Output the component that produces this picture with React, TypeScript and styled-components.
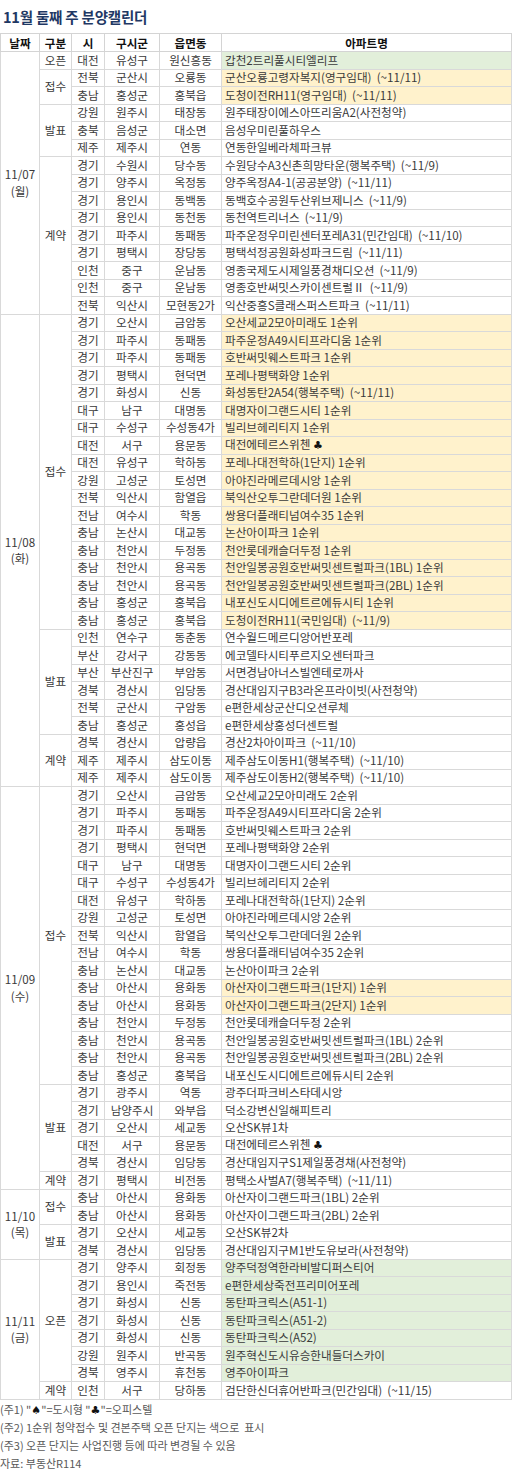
import styled, { createGlobalStyle } from 'styled-components'

const GlobalStyle = createGlobalStyle`
    html, body {
        margin: 0;
        padding: 0;
        background: #ffffff;
    }
    body {
        font-family: "Noto Sans CJK KR", "Noto Sans", sans-serif;
    }
`

type Hl = 'g' | 'y' | undefined
type Row = [string, string, string, string, Hl?]
type Group = { type: string; rows: Row[] }
type Day = { date: string; dow: string; groups: Group[] }

const days: Day[] = [
    {
        date: '11/07',
        dow: '월',
        groups: [
            { type: '오픈', rows: [['대전', '유성구', '원신흥동', '갑천2트리풀시티엘리프', 'g']] },
            {
                type: '접수',
                rows: [
                    ['전북', '군산시', '오룡동', '군산오룡고령자복지(영구임대)  (~11/11)', 'y'],
                    ['충남', '홍성군', '홍북읍', '도청이전RH11(영구임대)  (~11/11)', 'y'],
                ],
            },
            {
                type: '발표',
                rows: [
                    ['강원', '원주시', '태장동', '원주태장이에스아뜨리움A2(사전청약)'],
                    ['충북', '음성군', '대소면', '음성우미린풀하우스'],
                    ['제주', '제주시', '연동', '연동한일베라체파크뷰'],
                ],
            },
            {
                type: '계약',
                rows: [
                    ['경기', '수원시', '당수동', '수원당수A3신촌희망타운(행복주택)  (~11/9)'],
                    ['경기', '양주시', '옥정동', '양주옥정A4-1(공공분양)  (~11/11)'],
                    ['경기', '용인시', '동백동', '동백호수공원두산위브제니스  (~11/9)'],
                    ['경기', '용인시', '동천동', '동천역트리너스  (~11/9)'],
                    ['경기', '파주시', '동패동', '파주운정우미린센터포레A31(민간임대)  (~11/10)'],
                    ['경기', '평택시', '장당동', '평택석정공원화성파크드림  (~11/11)'],
                    ['인천', '중구', '운남동', '영종국제도시제일풍경채디오션  (~11/9)'],
                    ['인천', '중구', '운남동', '영종호반써밋스카이센트럴Ⅱ  (~11/9)'],
                    ['전북', '익산시', '모현동2가', '익산중흥S클래스퍼스트파크  (~11/11)'],
                ],
            },
        ],
    },
    {
        date: '11/08',
        dow: '화',
        groups: [
            {
                type: '접수',
                rows: [
                    ['경기', '오산시', '금암동', '오산세교2모아미래도 1순위', 'y'],
                    ['경기', '파주시', '동패동', '파주운정A49시티프라디움 1순위', 'y'],
                    ['경기', '파주시', '동패동', '호반써밋웨스트파크 1순위', 'y'],
                    ['경기', '평택시', '현덕면', '포레나평택화양 1순위', 'y'],
                    ['경기', '화성시', '신동', '화성동탄2A54(행복주택)  (~11/11)', 'y'],
                    ['대구', '남구', '대명동', '대명자이그랜드시티 1순위', 'y'],
                    ['대구', '수성구', '수성동4가', '빌리브헤리티지 1순위', 'y'],
                    ['대전', '서구', '용문동', '대전에테르스위첸 ♣', 'y'],
                    ['대전', '유성구', '학하동', '포레나대전학하(1단지) 1순위', 'y'],
                    ['강원', '고성군', '토성면', '아야진라메르데시앙 1순위', 'y'],
                    ['전북', '익산시', '함열읍', '북익산오투그란데더원 1순위', 'y'],
                    ['전남', '여수시', '학동', '쌍용더플래티넘여수35 1순위', 'y'],
                    ['충남', '논산시', '대교동', '논산아이파크 1순위', 'y'],
                    ['충남', '천안시', '두정동', '천안롯데캐슬더두정 1순위', 'y'],
                    ['충남', '천안시', '용곡동', '천안일봉공원호반써밋센트럴파크(1BL) 1순위', 'y'],
                    ['충남', '천안시', '용곡동', '천안일봉공원호반써밋센트럴파크(2BL) 1순위', 'y'],
                    ['충남', '홍성군', '홍북읍', '내포신도시디에트르에듀시티 1순위', 'y'],
                    ['충남', '홍성군', '홍북읍', '도청이전RH11(국민임대)  (~11/9)', 'y'],
                ],
            },
            {
                type: '발표',
                rows: [
                    ['인천', '연수구', '동춘동', '연수월드메르디앙어반포레'],
                    ['부산', '강서구', '강동동', '에코델타시티푸르지오센터파크'],
                    ['부산', '부산진구', '부암동', '서면경남아너스빌엔테로까사'],
                    ['경북', '경산시', '임당동', '경산대임지구B3라온프라이빗(사전청약)'],
                    ['전북', '군산시', '구암동', 'e편한세상군산디오션루체'],
                    ['충남', '홍성군', '홍성읍', 'e편한세상홍성더센트럴'],
                ],
            },
            {
                type: '계약',
                rows: [
                    ['경북', '경산시', '압량읍', '경산2차아이파크  (~11/10)'],
                    ['제주', '제주시', '삼도이동', '제주삼도이동H1(행복주택)  (~11/10)'],
                    ['제주', '제주시', '삼도이동', '제주삼도이동H2(행복주택)  (~11/10)'],
                ],
            },
        ],
    },
    {
        date: '11/09',
        dow: '수',
        groups: [
            {
                type: '접수',
                rows: [
                    ['경기', '오산시', '금암동', '오산세교2모아미래도 2순위'],
                    ['경기', '파주시', '동패동', '파주운정A49시티프라디움 2순위'],
                    ['경기', '파주시', '동패동', '호반써밋웨스트파크 2순위'],
                    ['경기', '평택시', '현덕면', '포레나평택화양 2순위'],
                    ['대구', '남구', '대명동', '대명자이그랜드시티 2순위'],
                    ['대구', '수성구', '수성동4가', '빌리브헤리티지 2순위'],
                    ['대전', '유성구', '학하동', '포레나대전학하(1단지) 2순위'],
                    ['강원', '고성군', '토성면', '아야진라메르데시앙 2순위'],
                    ['전북', '익산시', '함열읍', '북익산오투그란데더원 2순위'],
                    ['전남', '여수시', '학동', '쌍용더플래티넘여수35 2순위'],
                    ['충남', '논산시', '대교동', '논산아이파크 2순위'],
                    ['충남', '아산시', '용화동', '아산자이그랜드파크(1단지) 1순위', 'y'],
                    ['충남', '아산시', '용화동', '아산자이그랜드파크(2단지) 1순위', 'y'],
                    ['충남', '천안시', '두정동', '천안롯데캐슬더두정 2순위'],
                    ['충남', '천안시', '용곡동', '천안일봉공원호반써밋센트럴파크(1BL) 2순위'],
                    ['충남', '천안시', '용곡동', '천안일봉공원호반써밋센트럴파크(2BL) 2순위'],
                    ['충남', '홍성군', '홍북읍', '내포신도시디에트르에듀시티 2순위'],
                ],
            },
            {
                type: '발표',
                rows: [
                    ['경기', '광주시', '역동', '광주더파크비스타데시앙'],
                    ['경기', '남양주시', '와부읍', '덕소강변신일해피트리'],
                    ['경기', '오산시', '세교동', '오산SK뷰1차'],
                    ['대전', '서구', '용문동', '대전에테르스위첸 ♣'],
                    ['경북', '경산시', '임당동', '경산대임지구S1제일풍경채(사전청약)'],
                ],
            },
            {
                type: '계약',
                rows: [['경기', '평택시', '비전동', '평택소사벌A7(행복주택)  (~11/11)']],
            },
        ],
    },
    {
        date: '11/10',
        dow: '목',
        groups: [
            {
                type: '접수',
                rows: [
                    ['충남', '아산시', '용화동', '아산자이그랜드파크(1BL) 2순위'],
                    ['충남', '아산시', '용화동', '아산자이그랜드파크(2BL) 2순위'],
                ],
            },
            {
                type: '발표',
                rows: [
                    ['경기', '오산시', '세교동', '오산SK뷰2차'],
                    ['경북', '경산시', '임당동', '경산대임지구M1반도유보라(사전청약)'],
                ],
            },
        ],
    },
    {
        date: '11/11',
        dow: '금',
        groups: [
            {
                type: '오픈',
                rows: [
                    ['경기', '양주시', '회정동', '양주덕정역한라비발디퍼스티어', 'g'],
                    ['경기', '용인시', '죽전동', 'e편한세상죽전프리미어포레', 'g'],
                    ['경기', '화성시', '신동', '동탄파크릭스(A51-1)', 'g'],
                    ['경기', '화성시', '신동', '동탄파크릭스(A51-2)', 'g'],
                    ['경기', '화성시', '신동', '동탄파크릭스(A52)', 'g'],
                    ['강원', '원주시', '반곡동', '원주혁신도시유승한내들더스카이', 'g'],
                    ['경북', '영주시', '휴천동', '영주아이파크', 'g'],
                ],
            },
            {
                type: '계약',
                rows: [['인천', '서구', '당하동', '검단한신더휴어반파크(민간임대)  (~11/15)']],
            },
        ],
    },
]

const notes = [
    '(주1) "♠"=도시형 "♣"=오피스텔',
    '(주2) 1순위 청약접수 및 견본주택 오픈 단지는 색으로  표시',
    '(주3) 오픈 단지는 사업진행 등에 따라 변경될 수 있음',
    '자료: 부동산R114',
]

const Page = styled.div`
    width: 512px;
    color: #3a3a3a;
`

const Title = styled.h1`
    margin: 0;
    height: 33px;
    padding-left: 3px;
    display: flex;
    align-items: center;
    font-size: 14.5px;
    font-weight: 700;
    color: #1f3864;
    letter-spacing: -0.2px;
`

const Table = styled.table`
    width: 512px;
    table-layout: fixed;
    border-collapse: collapse;
    font-size: 11.6px;
`

const HeadRow = styled.tr`
    height: 18px;
`

const HeadCell = styled.th`
    padding: 0;
    border: 1px solid #d4d4d4;
    font-weight: 700;
    color: #111;
    text-align: center;
    line-height: 16px;
`

const Tr = styled.tr`
    height: 17.5px;
`

const Cell = styled.td`
    padding: 0;
    border: 1px solid #d9d9d9;
    text-align: center;
    line-height: 15px;
    white-space: nowrap;
    overflow: hidden;
`

const DateCell = styled(Cell)`
    line-height: 16.5px;
    white-space: normal;
`

const NameCell = styled(Cell)<{ $hl?: Hl }>`
    text-align: left;
    padding-left: 3px;
    white-space: pre;
    background: ${p => (p.$hl === 'g' ? '#e2efda' : p.$hl === 'y' ? '#fff2cc' : '#ffffff')};
`

const Club = styled.span`
    font-family: "DejaVu Sans", sans-serif;
    color: #111;
    font-size: 11px;
`

const Notes = styled.div`
    display: flex;
    flex-direction: column;
`

const Note = styled.div`
    height: 18.2px;
    line-height: 18px;
    font-size: 11px;
    color: #595959;
    white-space: pre;
`

const renderName = (name: string) => {
    const idx = name.indexOf('♣')
    if (idx < 0) return name
    return (
        <>
            {name.slice(0, idx)}
            <Club>♣</Club>
            {name.slice(idx + 1)}
        </>
    )
}

const renderNote = (text: string) => {
    const parts = text.split(/([♠♣])/)
    return parts.map((p, i) => (p === '♠' || p === '♣' ? <Club key={i}>{p}</Club> : <span key={i}>{p}</span>))
}

export default function App() {
    return (
        <Page>
            <GlobalStyle />
            <Title>11월 둘째 주 분양캘린더</Title>
            <Table>
                <colgroup>
                    <col style={{ width: 39 }} />
                    <col style={{ width: 32 }} />
                    <col style={{ width: 33 }} />
                    <col style={{ width: 55 }} />
                    <col style={{ width: 62 }} />
                    <col />
                </colgroup>
                <thead>
                    <HeadRow>
                        <HeadCell>날짜</HeadCell>
                        <HeadCell>구분</HeadCell>
                        <HeadCell>시</HeadCell>
                        <HeadCell>구시군</HeadCell>
                        <HeadCell>읍면동</HeadCell>
                        <HeadCell>아파트명</HeadCell>
                    </HeadRow>
                </thead>
                <tbody>
                    {days.map(day => {
                        const total = day.groups.reduce((n, g) => n + g.rows.length, 0)
                        return day.groups.map((group, gi) =>
                            group.rows.map((row, ri) => (
                                <Tr key={`${day.date}-${gi}-${ri}`}>
                                    {gi === 0 && ri === 0 && (
                                        <DateCell rowSpan={total}>
                                            {day.date}
                                            <br />({day.dow})
                                        </DateCell>
                                    )}
                                    {ri === 0 && <Cell rowSpan={group.rows.length}>{group.type}</Cell>}
                                    <Cell>{row[0]}</Cell>
                                    <Cell>{row[1]}</Cell>
                                    <Cell>{row[2]}</Cell>
                                    <NameCell $hl={row[4]}>{renderName(row[3])}</NameCell>
                                </Tr>
                            ))
                        )
                    })}
                </tbody>
            </Table>
            <Notes>
                {notes.map(n => (
                    <Note key={n}>{renderNote(n)}</Note>
                ))}
            </Notes>
        </Page>
    )
}
